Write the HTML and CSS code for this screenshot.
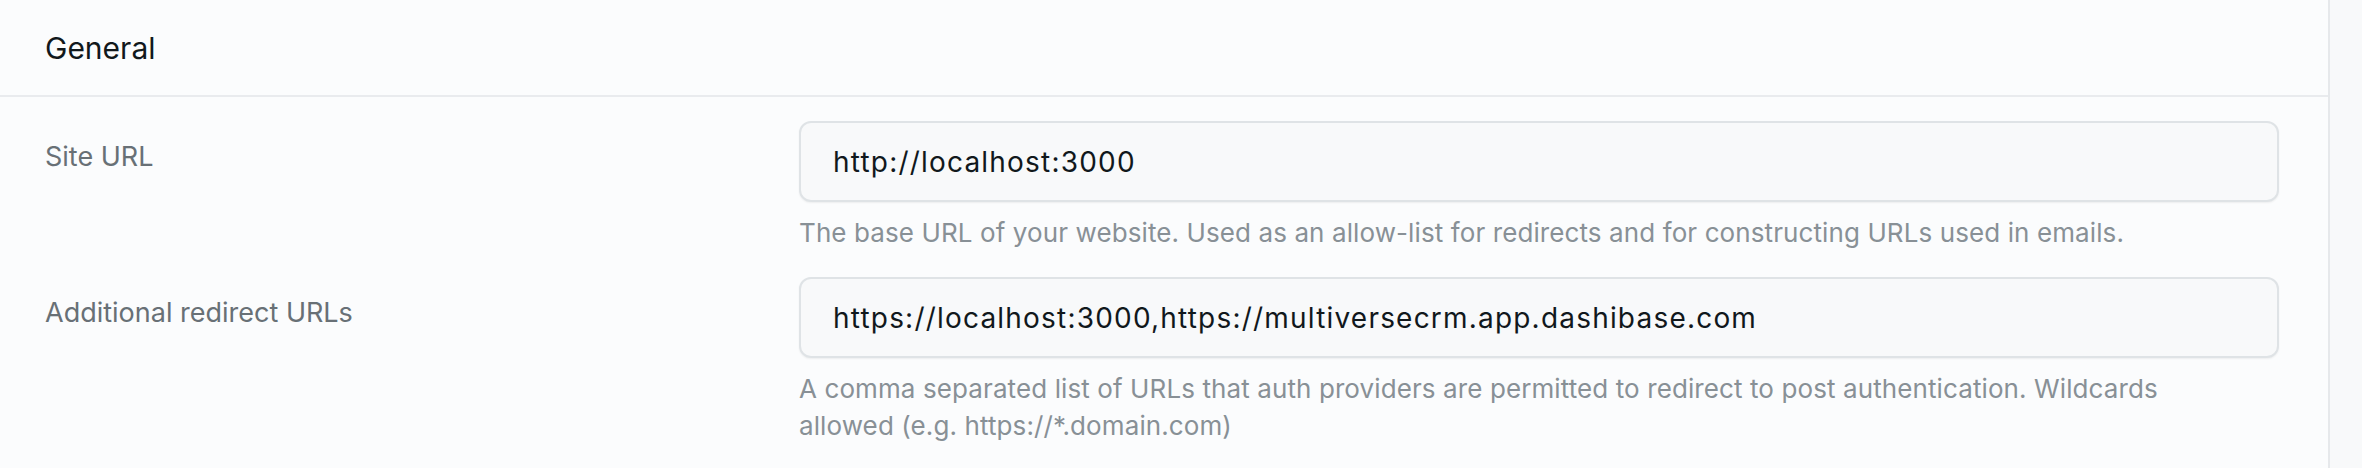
FILE: index.html
```html
<!DOCTYPE html>
<html>
<head>
<meta charset="utf-8">
<link rel="stylesheet" href="styles.css">
</head>
<body>
<div class="page">
  <section class="panel">
    <header class="panel-header">
      <h2 class="panel-title">General</h2>
    </header>
    <div class="form">
      <div class="row">
        <label class="label">Site URL</label>
        <div class="field">
          <div class="input">http://localhost:3000</div>
          <p class="help">The base URL of your website. Used as an allow-list for redirects and for constructing URLs used in emails.</p>
        </div>
      </div>
      <div class="row">
        <label class="label">Additional redirect URLs</label>
        <div class="field">
          <div class="input">https://localhost:3000,https://multiversecrm.app.dashibase.com</div>
          <p class="help">A comma separated list of URLs that auth providers are permitted to redirect to post authentication. Wildcards allowed (e.g. https://*.domain.com)</p>
        </div>
      </div>
    </div>
  </section>
</div>
</body>
</html>
```

FILE: styles.css
```css
html, body {
  margin: 0;
  padding: 0;
  background: #f8f9fa;
  font-family: Inter, "Liberation Sans", sans-serif;
}
.page {
  display: flex;
  width: 2362px;
  height: 468px;
  overflow: hidden;
}
.panel {
  width: 2328px;
  flex: none;
  background: #fbfcfd;
  border-right: 2px solid #e6e8eb;
  height: 468px;
}
.panel-header {
  display: flex;
  align-items: center;
  padding: 0 45px;
  border-bottom: 2px solid #e9ebee;
  box-sizing: border-box;
  height: 97px;
}
.panel-title {
  margin: 0;
  font-weight: 400;
  font-size: 30px;
  color: #11181c;
  padding-top: 1px;
}
.form {
  padding: 24px 49px 0 45px;
  display: flex;
  flex-direction: column;
  gap: 26px;
}
.row {
  display: grid;
  grid-template-columns: 754px 1fr;
}
.label {
  font-size: 27px;
  line-height: 40px;
  color: #687076;
  padding-top: 16px;
}
.field {
  display: flex;
  flex-direction: column;
}
.input {
  height: 81px;
  box-sizing: border-box;
  border: 2px solid #dfe3e6;
  border-radius: 12px;
  background: #f8f9fa;
  box-shadow: 0 1px 2px rgba(0, 0, 0, 0.06);
  padding: 0 32px;
  display: flex;
  align-items: center;
  font-size: 28px;
  letter-spacing: 1.2px;
  color: #11181c;
}
.help {
  margin: 12px 0 0;
  max-width: 1440px;
  font-size: 26px;
  line-height: 37px;
  letter-spacing: 0.1px;
  color: #889096;
}
```
